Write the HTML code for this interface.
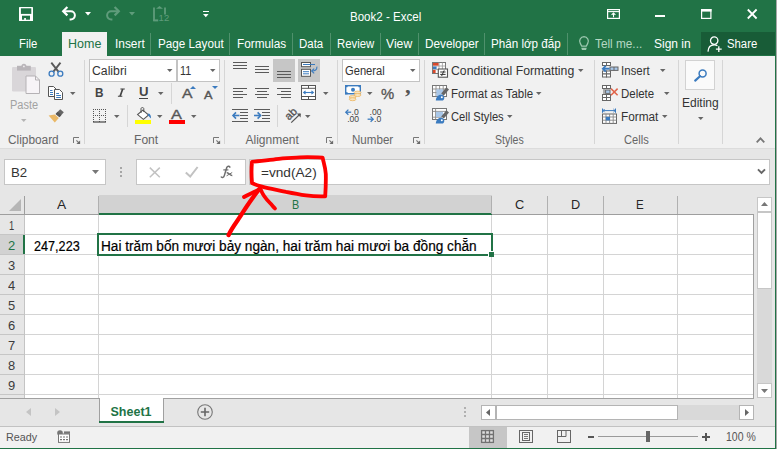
<!DOCTYPE html>
<html>
<head>
<meta charset="utf-8">
<title>Book2 - Excel</title>
<style>
html,body{margin:0;padding:0;}
body{width:777px;height:449px;overflow:hidden;position:relative;background:#f1f1f1;font-family:"Liberation Sans",sans-serif;font-size:12px;color:#444;}
.a{position:absolute;}
.t{position:absolute;white-space:nowrap;transform-origin:0 50%;}
.box{position:absolute;background:#fff;border:1px solid #c6c6c6;box-sizing:border-box;}
svg{position:absolute;overflow:visible;}
</style>
</head>
<body>
<div class="a" style="left:0px;top:0px;width:775px;height:56px;background:#217346;"></div>
<svg style="left:19px;top:7px" width="14" height="14" viewBox="0 0 14 14"><rect x="0" y="0" width="14" height="14" rx="0.6" fill="#fff"/><rect x="1.9" y="1.3" width="10.4" height="5.6" fill="#217346"/><rect x="3" y="8.7" width="8" height="4" fill="#217346"/><rect x="5.2" y="11" width="1.7" height="2" fill="#fff"/></svg>
<svg style="left:61px;top:6px" width="16" height="15" viewBox="0 0 16 15"><path d="M2.4 5.2H9.8A4.1 4.1 0 0 1 9.8 13.4H8.6" fill="none" stroke="#fff" stroke-width="2"/><path d="M6.4 1L2.2 5.2L6.4 9.4" fill="none" stroke="#fff" stroke-width="2.2"/></svg>
<svg style="left:85px;top:12px" width="6" height="3.5" viewBox="0 0 6 3.5"><path d="M0 0H6L3.0 3.5Z" fill="#fff"/></svg>
<svg style="left:105px;top:6px" width="16" height="15" viewBox="0 0 16 15"><path d="M13.6 5.2H6.2A4.1 4.1 0 0 0 6.2 13.4H7.4" fill="none" stroke="#5f9c7b" stroke-width="2"/><path d="M9.6 1L13.8 5.2L9.6 9.4" fill="none" stroke="#5f9c7b" stroke-width="2.2"/></svg>
<svg style="left:128.5px;top:12px" width="6" height="3.5" viewBox="0 0 6 3.5"><path d="M0 0H6L3.0 3.5Z" fill="#5f9c7b"/></svg>
<svg style="left:153px;top:6px" width="16" height="16" viewBox="0 0 16 16"><path d="M1 1.6V15" fill="none" stroke="#5f9c7b" stroke-width="1.8"/><path d="M0.2 14.4H5.2" stroke="#5f9c7b" stroke-width="2"/><path d="M12 1.6V8.6" fill="none" stroke="#5f9c7b" stroke-width="1.8"/><path d="M3 2.8L6.5 0L10 2.8Z" fill="#5f9c7b"/><text x="5.6" y="15.4" font-family="Liberation Sans" font-size="9.5" fill="#5f9c7b">12</text></svg>
<div class="a" style="left:203px;top:11px;width:5.6px;height:1.1px;background:#fff;"></div>
<svg style="left:203px;top:13.7px" width="5.6" height="3.2" viewBox="0 0 5.6 3.2"><path d="M0 0H5.6L2.8 3.2Z" fill="#fff"/></svg>
<span class="t" style='left:349.5px;top:8.5px;font-size:12.5px;color:#fff;line-height:16px;transform:scaleX(0.9232);'>Book2 - Excel</span>
<svg style="left:607px;top:9px" width="13" height="10" viewBox="0 0 13 10"><rect x="0.6" y="0.6" width="11.8" height="8.8" fill="none" stroke="#fff" stroke-width="1.2"/><path d="M0.6 2.6H12.4" stroke="#fff" stroke-width="1.1"/><path d="M6.5 8.2V4.2M4.6 5.9L6.5 4L8.4 5.9" fill="none" stroke="#fff" stroke-width="1.1"/></svg>
<div class="a" style="left:655px;top:15px;width:10px;height:1.6px;background:#fff;"></div>
<svg style="left:701px;top:9px" width="11" height="10" viewBox="0 0 11 10"><rect x="0.6" y="0.6" width="9.3" height="8.8" fill="none" stroke="#fff" stroke-width="1.2"/><rect x="0" y="0" width="10.5" height="2.6" fill="#fff"/></svg>
<svg style="left:747px;top:9px" width="11" height="10" viewBox="0 0 11 10"><path d="M0.8 0.5L9.6 9.5M9.6 0.5L0.8 9.5" stroke="#fff" stroke-width="1.8"/></svg>
<div class="a" style="left:62px;top:32px;width:45px;height:24px;background:#f1f1f1;"></div>
<div class="a" style="left:701px;top:32px;width:74px;height:23px;background:#185c37;"></div>
<span class="t" style='left:19.0px;top:36.0px;font-size:12.5px;color:#fff;line-height:16px;transform:scaleX(0.9029);'>File</span>
<span class="t" style='left:68.0px;top:36.0px;font-size:12.5px;color:#217346;line-height:16px;'>Home</span>
<span class="t" style='left:114.5px;top:36.0px;font-size:12.5px;color:#fff;line-height:16px;transform:scaleX(0.9499);'>Insert</span>
<span class="t" style='left:157.5px;top:36.0px;font-size:12.5px;color:#fff;line-height:16px;transform:scaleX(0.9359);'>Page Layout</span>
<span class="t" style='left:237.0px;top:36.0px;font-size:12.5px;color:#fff;line-height:16px;transform:scaleX(0.9445);'>Formulas</span>
<span class="t" style='left:299.0px;top:36.0px;font-size:12.5px;color:#fff;line-height:16px;transform:scaleX(0.9164);'>Data</span>
<span class="t" style='left:336.5px;top:36.0px;font-size:12.5px;color:#fff;line-height:16px;transform:scaleX(0.9073);'>Review</span>
<span class="t" style='left:385.5px;top:36.0px;font-size:12.5px;color:#fff;line-height:16px;transform:scaleX(0.9749);'>View</span>
<span class="t" style='left:424.5px;top:36.0px;font-size:12.5px;color:#fff;line-height:16px;transform:scaleX(0.9424);'>Developer</span>
<span class="t" style='left:490.5px;top:36.0px;font-size:12.5px;color:#fff;line-height:16px;transform:scaleX(0.9303);'>Phân lớp đắp</span>
<span class="t" style='left:595.0px;top:36.0px;font-size:12.5px;color:#b5d7c3;line-height:16px;transform:scaleX(0.9437);'>Tell me...</span>
<span class="t" style='left:654.0px;top:36.0px;font-size:12.5px;color:#fff;line-height:16px;transform:scaleX(0.9599);'>Sign in</span>
<span class="t" style='left:726.5px;top:36.0px;font-size:12.5px;color:#fff;line-height:16px;transform:scaleX(0.9053);'>Share</span>
<div class="a" style="left:150px;top:33px;width:1px;height:22px;background:#4f916c;"></div>
<div class="a" style="left:229px;top:33px;width:1px;height:22px;background:#4f916c;"></div>
<div class="a" style="left:292px;top:33px;width:1px;height:22px;background:#4f916c;"></div>
<div class="a" style="left:330px;top:33px;width:1px;height:22px;background:#4f916c;"></div>
<div class="a" style="left:380px;top:33px;width:1px;height:22px;background:#4f916c;"></div>
<div class="a" style="left:418px;top:33px;width:1px;height:22px;background:#4f916c;"></div>
<div class="a" style="left:484px;top:33px;width:1px;height:22px;background:#4f916c;"></div>
<div class="a" style="left:567px;top:33px;width:1px;height:22px;background:#4f916c;"></div>
<svg style="left:578px;top:36px" width="12" height="14" viewBox="0 0 12 14"><path d="M6 0.7A4.4 4.4 0 0 1 9.7 7.4L8.3 10.2H3.7L2.3 7.4A4.4 4.4 0 0 1 6 0.7Z" fill="none" stroke="#9cc8af" stroke-width="1.3"/><path d="M3.2 11.8H8.8L8 13.9H4Z" fill="#9cc8af"/></svg>
<svg style="left:707px;top:36px" width="17" height="17" viewBox="0 0 17 17"><circle cx="7.2" cy="4.6" r="3.7" fill="none" stroke="#fff" stroke-width="1.3"/><path d="M1 15.6C1.2 11 4 8.8 7.2 8.8C8.6 8.8 9.6 9.1 10.4 9.7" fill="none" stroke="#fff" stroke-width="1.3"/><path d="M11.8 10.2V16M8.9 13.1H14.7" stroke="#fff" stroke-width="1.3"/></svg>
<div class="a" style="left:0px;top:56px;width:775px;height:92px;background:#f1f1f1;"></div>
<div class="a" style="left:0px;top:148px;width:775px;height:1px;background:#dcdcdc;"></div>
<div class="a" style="left:84px;top:60px;width:1px;height:84px;background:#d6d6d6;"></div>
<div class="a" style="left:224px;top:60px;width:1px;height:84px;background:#d6d6d6;"></div>
<div class="a" style="left:337px;top:60px;width:1px;height:84px;background:#d6d6d6;"></div>
<div class="a" style="left:424px;top:60px;width:1px;height:84px;background:#d6d6d6;"></div>
<div class="a" style="left:594px;top:60px;width:1px;height:84px;background:#d6d6d6;"></div>
<div class="a" style="left:678px;top:60px;width:1px;height:84px;background:#d6d6d6;"></div>
<div class="a" style="left:722px;top:60px;width:1px;height:84px;background:#d6d6d6;"></div>
<svg style="left:12px;top:64px" width="28" height="30" viewBox="0 0 28 30"><rect x="0" y="3" width="24" height="24.5" rx="1.2" fill="#d9d6d9"/><rect x="5" y="1.8" width="13.8" height="4.8" fill="#b9b5b9"/><circle cx="11.9" cy="2.3" r="2.5" fill="#b9b5b9"/><circle cx="11.9" cy="2.4" r="0.9" fill="#efecef"/><path d="M14 12H23.5L27.5 16V29.5H14Z" fill="#f7f4f7" stroke="#b5b2b5" stroke-width="1"/><path d="M23.5 12V16H27.5" fill="none" stroke="#b5b2b5" stroke-width="1"/></svg>
<span class="t" style='left:10.0px;top:96.5px;font-size:12.5px;color:#a2a2a2;line-height:16px;transform:scaleX(0.8821);'>Paste</span>
<svg style="left:21px;top:119px" width="5.5" height="3" viewBox="0 0 5.5 3"><path d="M0 0H5.5L2.75 3Z" fill="#b5b5b5"/></svg>
<svg style="left:48px;top:62px" width="16" height="16" viewBox="0 0 16 16"><path d="M3.3 0.7L10.6 9.8M12.5 0.7L5.2 9.8" stroke="#5a5a5a" stroke-width="1.9" fill="none"/><circle cx="3.6" cy="11.7" r="2.5" fill="none" stroke="#3b7bbf" stroke-width="1.3"/><circle cx="12.3" cy="11.7" r="2.5" fill="none" stroke="#3b7bbf" stroke-width="1.3"/></svg>
<svg style="left:48px;top:86px" width="16" height="14" viewBox="0 0 16 14"><path d="M0.5 0.5H5.5L8 3V10.5H0.5Z" fill="#fff" stroke="#555" stroke-width="1"/><path d="M2 4.5H4.5M2 6.5H5M2 8.5H5" stroke="#3b7bbf" stroke-width="1"/><path d="M6.5 3.5H11.5L14.5 6.5V13.5H6.5Z" fill="#fff" stroke="#555" stroke-width="1"/><path d="M8.2 7.5H11M8.2 9.5H13M8.2 11.5H13" stroke="#3b7bbf" stroke-width="1"/></svg>
<svg style="left:70px;top:92px" width="5.5" height="3" viewBox="0 0 5.5 3"><path d="M0 0H5.5L2.75 3Z" fill="#666"/></svg>
<svg style="left:48px;top:108px" width="17" height="15" viewBox="0 0 17 15"><path d="M12.2 1.2L15.8 4.2L11.4 9.2L7.6 6Z" fill="#666"/><path d="M9.5 3.8L13.4 7L11.6 9L7.7 5.9Z" fill="#555"/><path d="M6.9 6.6L10.8 9.9L6.8 14.6L0.6 7.6Z" fill="#eab866"/></svg>
<span class="t" style='left:8.0px;top:131.5px;font-size:12px;color:#666;line-height:16px;transform:scaleX(0.9869);'>Clipboard</span>
<svg style="left:73px;top:137px" width="8" height="8" viewBox="0 0 8 8"><path d="M0.5 6V0.5H6" fill="none" stroke="#777" stroke-width="1"/><path d="M3.4 3.4L6 6" stroke="#777" stroke-width="1.1"/><path d="M7.1 3.4V7.1H3.4Z" fill="#6a6a6a"/></svg>
<div class="box" style="left:89px;top:59px;width:88px;height:23px;border-color:#c3c3c3"></div>
<div class="box" style="left:177px;top:59px;width:43px;height:23px;border-color:#c3c3c3"></div>
<span class="t" style='left:91.5px;top:62.5px;font-size:12.5px;color:#333;line-height:16px;transform:scaleX(0.9792);'>Calibri</span>
<svg style="left:167px;top:69px" width="5.5" height="3" viewBox="0 0 5.5 3"><path d="M0 0H5.5L2.75 3Z" fill="#666"/></svg>
<span class="t" style='left:180.0px;top:62.5px;font-size:12.5px;color:#333;line-height:16px;transform:scaleX(0.8626);'>11</span>
<svg style="left:209.5px;top:69px" width="5.5" height="3" viewBox="0 0 5.5 3"><path d="M0 0H5.5L2.75 3Z" fill="#666"/></svg>
<span class="t" style='left:95.0px;top:84.5px;font-size:12.5px;color:#444;line-height:16px;font-weight:bold;transform:scaleX(0.9412);'>B</span>
<svg style="left:0;top:0" width="777" height="449" viewBox="0 0 777 449"><path d="M120.4 89H124.8M117.9 96.2H122.3" stroke="#444" stroke-width="1.1"/><path d="M122.7 89L120.1 96.2" stroke="#444" stroke-width="1.7"/></svg>
<span class="t" style='left:138.5px;top:84.0px;font-size:12.5px;color:#444;line-height:16px;font-weight:bold;transform:scaleX(1.0519);'>U</span>
<div class="a" style="left:139px;top:98px;width:9px;height:1px;background:#444;"></div>
<svg style="left:158px;top:92px" width="5.5" height="3" viewBox="0 0 5.5 3"><path d="M0 0H5.5L2.75 3Z" fill="#666"/></svg>
<div class="a" style="left:171px;top:83px;width:1px;height:21px;background:#d6d6d6;"></div>
<span class="t" style='left:181.5px;top:85.5px;font-size:13.5px;color:#555;line-height:16px;transform:scaleX(1.1646);-webkit-text-stroke:0.35px #555;'>A</span>
<svg style="left:190px;top:86px" width="6" height="3" viewBox="0 0 6 3"><path d="M0 3H6L3 0Z" fill="#3b7bbf"/></svg>
<span class="t" style='left:204.3px;top:87.0px;font-size:10.5px;color:#555;line-height:16px;transform:scaleX(1.2116);-webkit-text-stroke:0.35px #555;'>A</span>
<svg style="left:212px;top:86px" width="6" height="3" viewBox="0 0 6 3"><path d="M0 0H6L3 3Z" fill="#3b7bbf"/></svg>
<svg style="left:93px;top:109px" width="13" height="14" viewBox="0 0 13 14"><rect x="0" y="0" width="1" height="1" fill="#555"/><rect x="0" y="6" width="1" height="1" fill="#555"/><rect x="0" y="0" width="1" height="1" fill="#555"/><rect x="6" y="0" width="1" height="1" fill="#555"/><rect x="12" y="0" width="1" height="1" fill="#555"/><rect x="2" y="0" width="1" height="1" fill="#555"/><rect x="2" y="6" width="1" height="1" fill="#555"/><rect x="0" y="2" width="1" height="1" fill="#555"/><rect x="6" y="2" width="1" height="1" fill="#555"/><rect x="12" y="2" width="1" height="1" fill="#555"/><rect x="4" y="0" width="1" height="1" fill="#555"/><rect x="4" y="6" width="1" height="1" fill="#555"/><rect x="0" y="4" width="1" height="1" fill="#555"/><rect x="6" y="4" width="1" height="1" fill="#555"/><rect x="12" y="4" width="1" height="1" fill="#555"/><rect x="6" y="0" width="1" height="1" fill="#555"/><rect x="6" y="6" width="1" height="1" fill="#555"/><rect x="0" y="6" width="1" height="1" fill="#555"/><rect x="6" y="6" width="1" height="1" fill="#555"/><rect x="12" y="6" width="1" height="1" fill="#555"/><rect x="8" y="0" width="1" height="1" fill="#555"/><rect x="8" y="6" width="1" height="1" fill="#555"/><rect x="0" y="8" width="1" height="1" fill="#555"/><rect x="6" y="8" width="1" height="1" fill="#555"/><rect x="12" y="8" width="1" height="1" fill="#555"/><rect x="10" y="0" width="1" height="1" fill="#555"/><rect x="10" y="6" width="1" height="1" fill="#555"/><rect x="0" y="10" width="1" height="1" fill="#555"/><rect x="6" y="10" width="1" height="1" fill="#555"/><rect x="12" y="10" width="1" height="1" fill="#555"/><rect x="12" y="0" width="1" height="1" fill="#555"/><rect x="12" y="6" width="1" height="1" fill="#555"/><rect x="0" y="12" width="1" height="1" fill="#555"/><rect x="6" y="12" width="1" height="1" fill="#555"/><rect x="12" y="12" width="1" height="1" fill="#555"/><rect x="0" y="12.4" width="13" height="1.2" fill="#444"/></svg>
<svg style="left:114px;top:115px" width="5.5" height="3" viewBox="0 0 5.5 3"><path d="M0 0H5.5L2.75 3Z" fill="#666"/></svg>
<div class="a" style="left:127px;top:105px;width:1px;height:22px;background:#d6d6d6;"></div>
<svg style="left:136px;top:107px" width="16" height="13" viewBox="0 0 16 13"><path d="M6.8 3.2L12.6 8L7.4 12.4L1.6 7.6Z" fill="#fff" stroke="#555" stroke-width="1.1"/><path d="M5 6V1.6C5 0.2 7.8 0.2 7.8 1.6V5" fill="none" stroke="#555" stroke-width="1"/><path d="M12.6 6.2C14.6 7.4 15.6 9.6 14.6 11.6C13.8 10 13 9 11.8 8.4Z" fill="#3b7bbf"/></svg>
<div class="a" style="left:135px;top:120px;width:16px;height:4px;background:#ffff00;"></div>
<svg style="left:157px;top:115px" width="5.5" height="3" viewBox="0 0 5.5 3"><path d="M0 0H5.5L2.75 3Z" fill="#666"/></svg>
<span class="t" style='left:171.3px;top:107.0px;font-size:13.5px;color:#555;line-height:16px;transform:scaleX(1.2090);-webkit-text-stroke:0.35px #555;'>A</span>
<div class="a" style="left:169px;top:120px;width:16px;height:4px;background:#ff0000;"></div>
<svg style="left:191px;top:115px" width="5.5" height="3" viewBox="0 0 5.5 3"><path d="M0 0H5.5L2.75 3Z" fill="#666"/></svg>
<span class="t" style='left:134.0px;top:131.5px;font-size:12px;color:#666;line-height:16px;transform:scaleX(1.0077);'>Font</span>
<svg style="left:213px;top:137px" width="8" height="8" viewBox="0 0 8 8"><path d="M0.5 6V0.5H6" fill="none" stroke="#777" stroke-width="1"/><path d="M3.4 3.4L6 6" stroke="#777" stroke-width="1.1"/><path d="M7.1 3.4V7.1H3.4Z" fill="#6a6a6a"/></svg>
<div class="a" style="left:233px;top:62px;width:14px;height:1px;background:#5a5a5a;"></div>
<div class="a" style="left:233px;top:65px;width:14px;height:1px;background:#5a5a5a;"></div>
<div class="a" style="left:233px;top:68px;width:14px;height:1px;background:#5a5a5a;"></div>
<div class="a" style="left:255px;top:66px;width:14px;height:1px;background:#5a5a5a;"></div>
<div class="a" style="left:255px;top:69px;width:14px;height:1px;background:#5a5a5a;"></div>
<div class="a" style="left:255px;top:72px;width:14px;height:1px;background:#5a5a5a;"></div>
<div class="a" style="left:273px;top:59px;width:22px;height:23px;background:#c6c6c6;"></div>
<div class="a" style="left:277px;top:71px;width:14px;height:1px;background:#5a5a5a;"></div>
<div class="a" style="left:277px;top:74px;width:14px;height:1px;background:#5a5a5a;"></div>
<div class="a" style="left:277px;top:77px;width:14px;height:1px;background:#5a5a5a;"></div>
<div class="a" style="left:298px;top:59px;width:22px;height:23px;background:#c6c6c6;"></div>
<svg style="left:301px;top:62px" width="17" height="15" viewBox="0 0 17 15"><rect x="0.5" y="0.5" width="9" height="4.2" fill="#fff" stroke="#555"/><path d="M2 2.5H14" stroke="#3b7bbf" stroke-width="1"/><rect x="0.5" y="7.3" width="9" height="7" fill="#fff" stroke="#555"/><path d="M2 9.7H8M2 11.8H8" stroke="#3b7bbf" stroke-width="1"/><path d="M15.9 4.6C16.2 7.8 14 9 11 9" fill="none" stroke="#3b7bbf" stroke-width="1.1"/><path d="M13.2 6.6L10.6 9L13.2 11.4" fill="none" stroke="#3b7bbf" stroke-width="1.1"/></svg>
<div class="a" style="left:233px;top:88px;width:14px;height:1px;background:#5a5a5a;"></div>
<div class="a" style="left:233px;top:91px;width:10px;height:1px;background:#5a5a5a;"></div>
<div class="a" style="left:233px;top:94px;width:14px;height:1px;background:#5a5a5a;"></div>
<div class="a" style="left:233px;top:97px;width:10px;height:1px;background:#5a5a5a;"></div>
<div class="a" style="left:255.0px;top:88px;width:14px;height:1px;background:#5a5a5a;"></div>
<div class="a" style="left:257.0px;top:91px;width:10px;height:1px;background:#5a5a5a;"></div>
<div class="a" style="left:255.0px;top:94px;width:14px;height:1px;background:#5a5a5a;"></div>
<div class="a" style="left:257.0px;top:97px;width:10px;height:1px;background:#5a5a5a;"></div>
<div class="a" style="left:277px;top:88px;width:14px;height:1px;background:#5a5a5a;"></div>
<div class="a" style="left:281px;top:91px;width:10px;height:1px;background:#5a5a5a;"></div>
<div class="a" style="left:277px;top:94px;width:14px;height:1px;background:#5a5a5a;"></div>
<div class="a" style="left:281px;top:97px;width:10px;height:1px;background:#5a5a5a;"></div>
<svg style="left:301px;top:85px" width="15" height="15" viewBox="0 0 15 15"><rect x="0.5" y="0.5" width="14" height="14" fill="#fff" stroke="#555"/><path d="M0.5 3.3H14.5M0.5 11.5H14.5M7.5 0.5V3.3M7.5 11.5V14.5" stroke="#555" stroke-width="1"/><path d="M3 7.5H12" stroke="#3b7bbf" stroke-width="1.1"/><path d="M4.6 5.8L2.6 7.5L4.6 9.2M10.4 5.8L12.4 7.5L10.4 9.2" fill="none" stroke="#3b7bbf" stroke-width="1.1"/></svg>
<svg style="left:323px;top:92px" width="5.5" height="3" viewBox="0 0 5.5 3"><path d="M0 0H5.5L2.75 3Z" fill="#666"/></svg>
<div class="a" style="left:232px;top:109px;width:16px;height:1px;background:#5a5a5a;"></div>
<div class="a" style="left:232px;top:121px;width:16px;height:1px;background:#5a5a5a;"></div>
<div class="a" style="left:240px;top:112px;width:8px;height:1px;background:#5a5a5a;"></div>
<div class="a" style="left:240px;top:115px;width:8px;height:1px;background:#5a5a5a;"></div>
<div class="a" style="left:240px;top:118px;width:8px;height:1px;background:#5a5a5a;"></div>
<svg style="left:232px;top:112px" width="8" height="7" viewBox="0 0 8 7"><path d="M1 3.5H7.5" stroke="#3b7bbf" stroke-width="1.6"/><path d="M4 0.4L1 3.5L4 6.6" fill="none" stroke="#3b7bbf" stroke-width="1.6"/></svg>
<div class="a" style="left:254px;top:109px;width:16px;height:1px;background:#5a5a5a;"></div>
<div class="a" style="left:254px;top:121px;width:16px;height:1px;background:#5a5a5a;"></div>
<div class="a" style="left:262px;top:112px;width:8px;height:1px;background:#5a5a5a;"></div>
<div class="a" style="left:262px;top:115px;width:8px;height:1px;background:#5a5a5a;"></div>
<div class="a" style="left:262px;top:118px;width:8px;height:1px;background:#5a5a5a;"></div>
<svg style="left:254px;top:112px" width="8" height="7" viewBox="0 0 8 7"><path d="M0 3.5H6.5" stroke="#3b7bbf" stroke-width="1.6"/><path d="M3.6 0.4L6.6 3.5L3.6 6.6" fill="none" stroke="#3b7bbf" stroke-width="1.6"/></svg>
<div class="a" style="left:277px;top:105px;width:1px;height:22px;background:#d6d6d6;"></div>
<svg style="left:285px;top:108px" width="17" height="15" viewBox="0 0 17 15"><g transform="translate(1.7,-1.9) rotate(-45 4 10)"><text x="-0.5" y="12.2" font-family="Liberation Sans" font-size="11" fill="#555" stroke="#555" stroke-width="0.35">ab</text></g><path d="M6.2 14.6L15.2 6" stroke="#555" stroke-width="1.2"/><path d="M11.8 5.6L15.8 5.4L15.6 9.4Z" fill="#555"/></svg>
<svg style="left:305px;top:115px" width="5.5" height="3" viewBox="0 0 5.5 3"><path d="M0 0H5.5L2.75 3Z" fill="#666"/></svg>
<span class="t" style='left:245.5px;top:131.5px;font-size:12px;color:#666;line-height:16px;'>Alignment</span>
<svg style="left:326px;top:137px" width="8" height="8" viewBox="0 0 8 8"><path d="M0.5 6V0.5H6" fill="none" stroke="#777" stroke-width="1"/><path d="M3.4 3.4L6 6" stroke="#777" stroke-width="1.1"/><path d="M7.1 3.4V7.1H3.4Z" fill="#6a6a6a"/></svg>
<div class="box" style="left:342px;top:59px;width:78px;height:23px;border-color:#c3c3c3"></div>
<span class="t" style='left:345.0px;top:62.5px;font-size:12.5px;color:#333;line-height:16px;transform:scaleX(0.8924);'>General</span>
<svg style="left:410px;top:69px" width="5.5" height="3" viewBox="0 0 5.5 3"><path d="M0 0H5.5L2.75 3Z" fill="#666"/></svg>
<svg style="left:345px;top:85px" width="17" height="16" viewBox="0 0 17 16"><rect x="0.7" y="0.7" width="14.6" height="8" fill="#fff" stroke="#3b7bbf" stroke-width="1.4"/><circle cx="8" cy="4.7" r="2" fill="#3b7bbf"/><rect x="0" y="0" width="2.6" height="2.2" fill="#3b7bbf"/><rect x="13.4" y="0" width="2.6" height="2.2" fill="#3b7bbf"/><rect x="0" y="7.2" width="2.6" height="2.2" fill="#3b7bbf"/><ellipse cx="12.6" cy="7.6" rx="3.4" ry="1.5" fill="#f8e3bd" stroke="#ecb664" stroke-width=".8"/><ellipse cx="12.6" cy="10" rx="3.4" ry="1.5" fill="#f8e3bd" stroke="#ecb664" stroke-width=".8"/><ellipse cx="7.6" cy="12" rx="3.4" ry="1.5" fill="#f8e3bd" stroke="#ecb664" stroke-width=".8"/><ellipse cx="7.6" cy="14.2" rx="3.4" ry="1.5" fill="#f8e3bd" stroke="#ecb664" stroke-width=".8"/></svg>
<svg style="left:367px;top:92px" width="5.5" height="3" viewBox="0 0 5.5 3"><path d="M0 0H5.5L2.75 3Z" fill="#666"/></svg>
<span class="t" style='left:380.5px;top:85.5px;font-size:14px;color:#555;line-height:16px;transform:scaleX(1.0600);-webkit-text-stroke:0.3px #555;'>%</span>
<span class="t" style='left:405.0px;top:77.5px;font-size:20px;color:#555;line-height:16px;font-weight:bold;font-family:"Liberation Serif",serif;transform:scaleX(1.1400);'>,</span>
<svg style="left:345px;top:108px" width="15" height="15" viewBox="0 0 15 15"><path d="M1 4.2H6.2" stroke="#3b7bbf" stroke-width="1.3"/><path d="M3.4 1.6L0.8 4.2L3.4 6.8" fill="none" stroke="#3b7bbf" stroke-width="1.3"/><text x="6.6" y="7" font-family="Liberation Sans" font-size="8.6" fill="#444">.0</text><text x="2.2" y="14" font-family="Liberation Sans" font-size="8.6" fill="#444">.00</text></svg>
<svg style="left:367px;top:108px" width="15" height="15" viewBox="0 0 15 15"><text x="2.6" y="7" font-family="Liberation Sans" font-size="8.6" fill="#444">.00</text><path d="M0.6 11.2H5.8" stroke="#3b7bbf" stroke-width="1.3"/><path d="M3.6 8.6L6.2 11.2L3.6 13.8" fill="none" stroke="#3b7bbf" stroke-width="1.3"/><text x="7" y="14" font-family="Liberation Sans" font-size="8.6" fill="#444">.0</text></svg>
<span class="t" style='left:352.0px;top:131.5px;font-size:12px;color:#666;line-height:16px;transform:scaleX(0.9652);'>Number</span>
<svg style="left:413px;top:137px" width="8" height="8" viewBox="0 0 8 8"><path d="M0.5 6V0.5H6" fill="none" stroke="#777" stroke-width="1"/><path d="M3.4 3.4L6 6" stroke="#777" stroke-width="1.1"/><path d="M7.1 3.4V7.1H3.4Z" fill="#6a6a6a"/></svg>
<svg style="left:432px;top:62px" width="17" height="16" viewBox="0 0 17 16"><rect x="0.5" y="0.5" width="13" height="11" fill="#fff" stroke="#777"/><path d="M0.5 4H13.5M0.5 7.6H13.5M7 0.5V11.5M10.4 0.5V11.5" stroke="#999" stroke-width=".8"/><rect x="1" y="1" width="5.6" height="2.6" fill="#d9482b"/><rect x="1" y="4.5" width="3.6" height="2.6" fill="#3b7bbf"/><rect x="1" y="8" width="2.6" height="3" fill="#d9482b"/><rect x="6.3" y="7" width="9.2" height="8.2" fill="#fff" stroke="#555" stroke-width="1.1"/><path d="M8.2 10H13.6M8.2 12.4H13.6M12.2 8.4L9.6 14" stroke="#333" stroke-width="1"/></svg>
<svg style="left:432px;top:85px" width="17" height="16" viewBox="0 0 17 16"><rect x="0.5" y="0.5" width="14" height="11" fill="#fff" stroke="#777"/><path d="M0.5 4H14.5M0.5 7.6H14.5M4 0.5V11.5M7.6 0.5V11.5M11.2 0.5V11.5" stroke="#888" stroke-width=".9"/><rect x="4.4" y="4.4" width="6.6" height="6.8" fill="#a9c7e8"/><path d="M14.4 2.2L17 4.4L11.8 10.6L9.2 8.4Z" fill="#666"/><path d="M3.8 15.6C4 12 6.6 9.2 9.6 9.8C12.6 10.4 13.2 13.6 11 15.6Z" fill="#3b7bbf"/><circle cx="9.8" cy="12.3" r="1" fill="#fff"/></svg>
<svg style="left:432px;top:108px" width="17" height="16" viewBox="0 0 17 16"><rect x="0.5" y="0.5" width="14" height="11" fill="#fff" stroke="#777"/><path d="M0.5 3.4H14.5M0.5 9.2H10M3.6 0.5V11.5" stroke="#888" stroke-width=".9"/><rect x="4" y="3.8" width="7" height="5.2" fill="#a9c7e8"/><path d="M14.4 2.2L17 4.4L11.8 10.6L9.2 8.4Z" fill="#666"/><path d="M3.8 15.6C4 12 6.6 9.2 9.6 9.8C12.6 10.4 13.2 13.6 11 15.6Z" fill="#3b7bbf"/><circle cx="9.8" cy="12.3" r="1" fill="#fff"/></svg>
<span class="t" style='left:451.0px;top:62.5px;font-size:12.5px;color:#333;line-height:16px;transform:scaleX(0.9796);'>Conditional Formatting</span>
<svg style="left:578px;top:69px" width="5.5" height="3" viewBox="0 0 5.5 3"><path d="M0 0H5.5L2.75 3Z" fill="#666"/></svg>
<span class="t" style='left:451.0px;top:85.5px;font-size:12.5px;color:#333;line-height:16px;transform:scaleX(0.9194);'>Format as Table</span>
<svg style="left:536px;top:92px" width="5.5" height="3" viewBox="0 0 5.5 3"><path d="M0 0H5.5L2.75 3Z" fill="#666"/></svg>
<span class="t" style='left:451.0px;top:108.5px;font-size:12.5px;color:#333;line-height:16px;transform:scaleX(0.8925);'>Cell Styles</span>
<svg style="left:507px;top:115px" width="5.5" height="3" viewBox="0 0 5.5 3"><path d="M0 0H5.5L2.75 3Z" fill="#666"/></svg>
<span class="t" style='left:494.5px;top:131.5px;font-size:12px;color:#666;line-height:16px;transform:scaleX(0.8780);'>Styles</span>
<svg style="left:602px;top:62px" width="17" height="16" viewBox="0 0 17 16"><rect x="0.5" y="0.5" width="4" height="3" fill="#fff" stroke="#666" stroke-width="1"/><rect x="4.5" y="0.5" width="4" height="3" fill="#fff" stroke="#666" stroke-width="1"/><rect x="0.5" y="9" width="4" height="3" fill="#fff" stroke="#666" stroke-width="1"/><rect x="4.5" y="9" width="4" height="3" fill="#fff" stroke="#666" stroke-width="1"/><rect x="0.5" y="12" width="4" height="3" fill="#fff" stroke="#666" stroke-width="1"/><rect x="4.5" y="12" width="4" height="3" fill="#fff" stroke="#666" stroke-width="1"/><rect x="8" y="5" width="8" height="3.4" fill="#a9c7e8" stroke="#666"/><path d="M12 5V8.4" stroke="#666"/><path d="M1 6.7H7.6" stroke="#3b7bbf" stroke-width="1.9"/><path d="M3.8 3.8L0.9 6.7L3.8 9.6" fill="none" stroke="#3b7bbf" stroke-width="1.9"/></svg>
<svg style="left:602px;top:85px" width="17" height="16" viewBox="0 0 17 16"><rect x="0.5" y="0.5" width="4" height="3" fill="#fff" stroke="#666" stroke-width="1"/><rect x="4.5" y="0.5" width="4" height="3" fill="#fff" stroke="#666" stroke-width="1"/><rect x="0.5" y="9.5" width="4" height="3" fill="#fff" stroke="#666" stroke-width="1"/><rect x="4.5" y="9.5" width="4" height="3" fill="#fff" stroke="#666" stroke-width="1"/><rect x="0.5" y="12.5" width="4" height="3" fill="#fff" stroke="#666" stroke-width="1"/><rect x="4.5" y="12.5" width="4" height="3" fill="#fff" stroke="#666" stroke-width="1"/><rect x="3.6" y="5" width="4.4" height="3.4" fill="#a9c7e8" stroke="#666"/><path d="M2 3.5V9.5" stroke="#666"/><path d="M9 3.6L15.6 10.2M15.6 3.6L9 10.2" stroke="#e0644a" stroke-width="1.5"/></svg>
<svg style="left:602px;top:108px" width="17" height="16" viewBox="0 0 17 16"><path d="M0.5 2.6H13.5" stroke="#3b7bbf" stroke-width="1"/><path d="M0.5 0.5V4.8M13.5 0.5V4.8" stroke="#3b7bbf" stroke-width="1"/><path d="M2.6 1L1 2.6L2.6 4.2M11.4 1L13 2.6L11.4 4.2" fill="none" stroke="#3b7bbf" stroke-width="1"/><rect x="0.5" y="6" width="14" height="9.4" fill="#fff" stroke="#666"/><path d="M0.5 9H14.5M0.5 12.2H14.5M4 6V15.4M7.6 6V15.4M11.2 6V15.4" stroke="#888" stroke-width=".9"/><rect x="3.8" y="8.8" width="4.2" height="3.6" fill="#3b7bbf"/></svg>
<span class="t" style='left:621.0px;top:62.5px;font-size:12.5px;color:#333;line-height:16px;transform:scaleX(0.9179);'>Insert</span>
<svg style="left:660px;top:69px" width="5.5" height="3" viewBox="0 0 5.5 3"><path d="M0 0H5.5L2.75 3Z" fill="#666"/></svg>
<span class="t" style='left:621.0px;top:85.5px;font-size:12.5px;color:#333;line-height:16px;transform:scaleX(0.9186);'>Delete</span>
<svg style="left:664px;top:92px" width="5.5" height="3" viewBox="0 0 5.5 3"><path d="M0 0H5.5L2.75 3Z" fill="#666"/></svg>
<span class="t" style='left:621.0px;top:108.5px;font-size:12.5px;color:#333;line-height:16px;transform:scaleX(0.9446);'>Format</span>
<svg style="left:662px;top:115px" width="5.5" height="3" viewBox="0 0 5.5 3"><path d="M0 0H5.5L2.75 3Z" fill="#666"/></svg>
<span class="t" style='left:623.5px;top:131.5px;font-size:12px;color:#666;line-height:16px;transform:scaleX(0.9261);'>Cells</span>
<div class="box" style="left:685px;top:60px;width:30px;height:30px;border-color:#d2d2d2;background:#fafafa"></div>
<svg style="left:694px;top:69px" width="14" height="13" viewBox="0 0 14 13"><circle cx="8.6" cy="4.6" r="3.5" fill="none" stroke="#3b7bbf" stroke-width="1.5"/><path d="M6 7.2L1.2 11.6" stroke="#3b7bbf" stroke-width="2.2" stroke-linecap="round"/></svg>
<span class="t" style='left:682.0px;top:94.5px;font-size:12.5px;color:#333;line-height:16px;transform:scaleX(0.9599);'>Editing</span>
<svg style="left:698px;top:117px" width="5.5" height="3" viewBox="0 0 5.5 3"><path d="M0 0H5.5L2.75 3Z" fill="#666"/></svg>
<svg style="left:756px;top:137px" width="9" height="6" viewBox="0 0 9 6"><path d="M0.7 5.3L4.5 1.4L8.3 5.3" fill="none" stroke="#777" stroke-width="1.8"/></svg>
<div class="a" style="left:0px;top:149px;width:775px;height:46px;background:#e6e6e6;"></div>
<div class="box" style="left:4px;top:159px;width:102px;height:26px;border-color:#c6c6c6"></div>
<span class="t" style='left:10.5px;top:164.5px;font-size:12.5px;color:#333;line-height:16px;transform:scaleX(1.0590);'>B2</span>
<svg style="left:92px;top:170px" width="7" height="4" viewBox="0 0 7 4"><path d="M0 0H7L3.5 4Z" fill="#777"/></svg>
<div class="a" style="left:120px;top:167px;width:2px;height:2px;background:#a6a6a6;"></div>
<div class="a" style="left:120px;top:171px;width:2px;height:2px;background:#a6a6a6;"></div>
<div class="a" style="left:120px;top:175px;width:2px;height:2px;background:#a6a6a6;"></div>
<div class="box" style="left:136px;top:159px;width:110px;height:26px;border-color:#c6c6c6"></div>
<svg style="left:149px;top:167px" width="12" height="11" viewBox="0 0 12 11"><path d="M0.8 0.6L10.8 10.2M10.8 0.6L0.8 10.2" stroke="#c2c2c2" stroke-width="1.5"/></svg>
<svg style="left:185px;top:166px" width="14" height="12" viewBox="0 0 14 12"><path d="M0.8 6.6L5.2 10.6L12.6 1" fill="none" stroke="#c2c2c2" stroke-width="2"/></svg>
<svg style="left:0;top:0" width="777" height="449" viewBox="0 0 777 449"><path d="M229.9 167.1C229.2 165.7 227.1 165.8 226.7 167.8L224.3 175.6C223.8 177.5 222.3 177.9 221.3 177" fill="none" stroke="#6e6e6e" stroke-width="1.5" stroke-linecap="round"/><path d="M223.3 169.9H228.4" stroke="#6e6e6e" stroke-width="1.2"/><path d="M226.7 172.7C228.6 172.5 230 175.7 232.3 175.5" fill="none" stroke="#6e6e6e" stroke-width="1.5"/><path d="M232.2 172.5L226.6 175.8" stroke="#6e6e6e" stroke-width="1"/></svg>
<div class="box" style="left:249px;top:159px;width:521px;height:26px;border-color:#c6c6c6"></div>
<span class="t" style='left:260.5px;top:164.5px;font-size:13px;color:#333;line-height:16px;transform:scaleX(1.0485);'>=vnd(A2)</span>
<svg style="left:757px;top:168px" width="9" height="7" viewBox="0 0 9 7"><path d="M1 1.4L4.5 5L8 1.4" fill="none" stroke="#666" stroke-width="1.9"/></svg>
<div class="a" style="left:0px;top:195px;width:775px;height:20px;background:#e6e6e6;"></div>
<div class="a" style="left:0px;top:214px;width:754px;height:1px;background:#9e9e9e;"></div>
<svg style="left:9px;top:199px" width="12" height="12" viewBox="0 0 12 12"><path d="M12 0V12H0Z" fill="#b6b6b6"/></svg>
<div class="a" style="left:24px;top:196px;width:1px;height:19px;background:#9e9e9e;"></div>
<div class="a" style="left:99px;top:195px;width:393px;height:19px;background:#d2d2d2;"></div>
<div class="a" style="left:99px;top:213px;width:393px;height:2px;background:#217346;"></div>
<div class="a" style="left:98px;top:196px;width:1px;height:18px;background:#b0b0b0;"></div>
<div class="a" style="left:491px;top:196px;width:1px;height:18px;background:#b0b0b0;"></div>
<div class="a" style="left:547px;top:196px;width:1px;height:18px;background:#b0b0b0;"></div>
<div class="a" style="left:603px;top:196px;width:1px;height:18px;background:#b0b0b0;"></div>
<div class="a" style="left:677px;top:196px;width:1px;height:18px;background:#b0b0b0;"></div>
<span class="t" style='left:57.0px;top:196.5px;font-size:13.5px;color:#262626;line-height:16px;transform:scaleX(1.0205);'>A</span>
<span class="t" style='left:291.5px;top:196.5px;font-size:13.5px;color:#217346;line-height:16px;transform:scaleX(0.7986);'>B</span>
<span class="t" style='left:515.0px;top:196.5px;font-size:13.5px;color:#262626;line-height:16px;transform:scaleX(0.9436);'>C</span>
<span class="t" style='left:570.5px;top:196.5px;font-size:13.5px;color:#262626;line-height:16px;transform:scaleX(0.9436);'>D</span>
<span class="t" style='left:636.0px;top:196.5px;font-size:13.5px;color:#262626;line-height:16px;transform:scaleX(0.8541);'>E</span>
<div class="a" style="left:25px;top:215px;width:728px;height:183px;background:#fff;"></div>
<div class="a" style="left:753px;top:215px;width:1px;height:183px;background:#a0a0a0;"></div>
<div class="a" style="left:25px;top:234px;width:728px;height:1px;background:#d4d4d4;"></div>
<div class="a" style="left:25px;top:254px;width:728px;height:1px;background:#d4d4d4;"></div>
<div class="a" style="left:25px;top:274px;width:728px;height:1px;background:#d4d4d4;"></div>
<div class="a" style="left:25px;top:294px;width:728px;height:1px;background:#d4d4d4;"></div>
<div class="a" style="left:25px;top:314px;width:728px;height:1px;background:#d4d4d4;"></div>
<div class="a" style="left:25px;top:334px;width:728px;height:1px;background:#d4d4d4;"></div>
<div class="a" style="left:25px;top:354px;width:728px;height:1px;background:#d4d4d4;"></div>
<div class="a" style="left:25px;top:374px;width:728px;height:1px;background:#d4d4d4;"></div>
<div class="a" style="left:25px;top:394px;width:728px;height:1px;background:#d4d4d4;"></div>
<div class="a" style="left:98px;top:215px;width:1px;height:183px;background:#d4d4d4;"></div>
<div class="a" style="left:491px;top:215px;width:1px;height:183px;background:#d4d4d4;"></div>
<div class="a" style="left:547px;top:215px;width:1px;height:183px;background:#d4d4d4;"></div>
<div class="a" style="left:603px;top:215px;width:1px;height:183px;background:#d4d4d4;"></div>
<div class="a" style="left:677px;top:215px;width:1px;height:183px;background:#d4d4d4;"></div>
<div class="a" style="left:0px;top:215px;width:24px;height:183px;background:#e6e6e6;"></div>
<div class="a" style="left:24px;top:215px;width:1px;height:183px;background:#c4c4c4;"></div>
<div class="a" style="left:0px;top:235px;width:23px;height:19px;background:#d2d2d2;"></div>
<div class="a" style="left:23px;top:235px;width:2px;height:19px;background:#217346;"></div>
<div class="a" style="left:0px;top:234px;width:24px;height:1px;background:#c6c6c6;"></div>
<span class="t" style='left:8.5px;top:217.5px;font-size:13.5px;color:#3c3c3c;line-height:16px;transform:scaleX(0.6919);'>1</span>
<div class="a" style="left:0px;top:254px;width:24px;height:1px;background:#c6c6c6;"></div>
<span class="t" style='left:7.5px;top:237.5px;font-size:13.5px;color:#217346;line-height:16px;transform:scaleX(0.9580);'>2</span>
<div class="a" style="left:0px;top:274px;width:24px;height:1px;background:#c6c6c6;"></div>
<span class="t" style='left:7.5px;top:257.5px;font-size:13.5px;color:#3c3c3c;line-height:16px;transform:scaleX(0.9580);'>3</span>
<div class="a" style="left:0px;top:294px;width:24px;height:1px;background:#c6c6c6;"></div>
<span class="t" style='left:7.5px;top:277.5px;font-size:13.5px;color:#3c3c3c;line-height:16px;transform:scaleX(0.9580);'>4</span>
<div class="a" style="left:0px;top:314px;width:24px;height:1px;background:#c6c6c6;"></div>
<span class="t" style='left:7.5px;top:297.5px;font-size:13.5px;color:#3c3c3c;line-height:16px;transform:scaleX(0.9580);'>5</span>
<div class="a" style="left:0px;top:334px;width:24px;height:1px;background:#c6c6c6;"></div>
<span class="t" style='left:7.5px;top:317.5px;font-size:13.5px;color:#3c3c3c;line-height:16px;transform:scaleX(0.9580);'>6</span>
<div class="a" style="left:0px;top:354px;width:24px;height:1px;background:#c6c6c6;"></div>
<span class="t" style='left:7.5px;top:337.5px;font-size:13.5px;color:#3c3c3c;line-height:16px;transform:scaleX(0.9580);'>7</span>
<div class="a" style="left:0px;top:374px;width:24px;height:1px;background:#c6c6c6;"></div>
<span class="t" style='left:7.5px;top:357.5px;font-size:13.5px;color:#3c3c3c;line-height:16px;transform:scaleX(0.9580);'>8</span>
<div class="a" style="left:0px;top:394px;width:24px;height:1px;background:#c6c6c6;"></div>
<span class="t" style='left:7.5px;top:377.5px;font-size:13.5px;color:#3c3c3c;line-height:16px;transform:scaleX(0.9580);'>9</span>
<span class="t" style='left:34.0px;top:237.5px;font-size:14px;color:#000;line-height:16px;transform:scaleX(0.9030);-webkit-text-stroke:0.2px #000;'>247,223</span>
<span class="t" style='left:100.5px;top:237.5px;font-size:14px;color:#000;line-height:16px;transform:scaleX(0.9739);-webkit-text-stroke:0.2px #000;'>Hai trăm bốn mươi bảy ngàn, hai trăm hai mươi ba đồng chẵn</span>
<div class="a" style="left:97px;top:233px;width:392px;height:19px;border:2px solid #217346;"></div>
<div class="a" style="left:488px;top:251px;width:6px;height:6px;background:#fff;"></div>
<div class="a" style="left:489px;top:252px;width:5px;height:5px;background:#217346;"></div>
<div class="a" style="left:754px;top:195px;width:21px;height:203px;background:#e6e6e6;"></div>
<div class="a" style="left:757px;top:212px;width:15px;height:172px;background:#d9d9d9;"></div>
<div class="box" style="left:757px;top:197px;width:15px;height:15px;border-color:#c6c6c6"></div>
<svg style="left:761px;top:202px" width="7" height="4" viewBox="0 0 7 4"><path d="M0 4H7L3.5 0Z" fill="#777"/></svg>
<div class="box" style="left:757px;top:212px;width:15px;height:77px;border-color:#c6c6c6"></div>
<div class="box" style="left:757px;top:383px;width:15px;height:15px;border-color:#c6c6c6"></div>
<svg style="left:761px;top:389px" width="7" height="4" viewBox="0 0 7 4"><path d="M0 0H7L3.5 4Z" fill="#777"/></svg>
<div class="a" style="left:0px;top:398px;width:775px;height:28px;background:#e6e6e6;"></div>
<div class="a" style="left:0px;top:398px;width:99px;height:1px;background:#a0a0a0;"></div>
<div class="a" style="left:164px;top:398px;width:590px;height:1px;background:#a0a0a0;"></div>
<div class="a" style="left:99px;top:398px;width:65px;height:23px;background:#fff;"></div>
<div class="a" style="left:99px;top:398px;width:1px;height:24px;background:#a0a0a0;"></div>
<div class="a" style="left:163px;top:398px;width:1px;height:24px;background:#a0a0a0;"></div>
<div class="a" style="left:99px;top:421px;width:65px;height:2px;background:#217346;"></div>
<span class="t" style='left:110.5px;top:403.5px;font-size:12.5px;color:#217346;line-height:16px;font-weight:bold;'>Sheet1</span>
<svg style="left:26px;top:408px" width="5" height="8" viewBox="0 0 5 8"><path d="M5 0V8L0 4Z" fill="#c4c4c4"/></svg>
<svg style="left:55px;top:408px" width="5" height="8" viewBox="0 0 5 8"><path d="M0 0V8L5 4Z" fill="#c4c4c4"/></svg>
<svg style="left:197px;top:404px" width="16" height="16" viewBox="0 0 16 16"><circle cx="8" cy="8" r="7.3" fill="none" stroke="#777" stroke-width="1.1"/><path d="M8 3.8V12.2M3.8 8H12.2" stroke="#666" stroke-width="1.6"/></svg>
<div class="a" style="left:464px;top:407px;width:2px;height:2px;background:#b0b0b0;"></div>
<div class="a" style="left:464px;top:411px;width:2px;height:2px;background:#b0b0b0;"></div>
<div class="a" style="left:464px;top:415px;width:2px;height:2px;background:#b0b0b0;"></div>
<div class="a" style="left:481px;top:405px;width:273px;height:15px;background:#d9d9d9;"></div>
<div class="box" style="left:481px;top:405px;width:15px;height:15px;border-color:#b4b4b4"></div>
<svg style="left:486px;top:409px" width="4" height="7" viewBox="0 0 4 7"><path d="M4 0V7L0 3.5Z" fill="#666"/></svg>
<div class="box" style="left:496px;top:405px;width:182px;height:15px;border-color:#b4b4b4"></div>
<div class="box" style="left:739px;top:405px;width:15px;height:15px;border-color:#b4b4b4"></div>
<svg style="left:745px;top:409px" width="4" height="7" viewBox="0 0 4 7"><path d="M0 0V7L4 3.5Z" fill="#666"/></svg>
<div class="a" style="left:0px;top:426px;width:775px;height:1px;background:#c2c2c2;"></div>
<div class="a" style="left:0px;top:427px;width:775px;height:21px;background:#f1f1f1;"></div>
<span class="t" style='left:6.0px;top:429.0px;font-size:11.5px;color:#555;line-height:16px;transform:scaleX(0.9383);'>Ready</span>
<svg style="left:57px;top:430px" width="13" height="13" viewBox="0 0 13 13"><circle cx="3" cy="3" r="2.8" fill="#777"/><rect x="7" y="1.4" width="6" height="2.4" fill="#777"/><rect x="1.5" y="4" width="11" height="8.4" fill="#fff" stroke="#777" stroke-width="1"/><path d="M3 7H5M6 7H8M9 7H11M3 9.6H5M6 9.6H8M9 9.6H11" stroke="#777" stroke-width="1.2"/></svg>
<div class="a" style="left:469px;top:427px;width:38px;height:21px;background:#c6c6c6;"></div>
<svg style="left:481px;top:430px" width="13" height="13" viewBox="0 0 13 13"><rect x="0.6" y="0.6" width="11.8" height="11.8" fill="#dedede" stroke="#727272" stroke-width="1.3"/><path d="M4.5 0.5V12.5M8.5 0.5V12.5M0.5 4.5H12.5M0.5 8.5H12.5" stroke="#727272" stroke-width="1.3"/></svg>
<svg style="left:519px;top:430px" width="14" height="13" viewBox="0 0 14 13"><rect x="0.5" y="0.5" width="13" height="12" fill="none" stroke="#666"/><rect x="3.5" y="2.5" width="7" height="8" fill="none" stroke="#666"/><path d="M5 4.5H9M5 6.5H9M5 8.5H9" stroke="#666" stroke-width="0.9"/></svg>
<svg style="left:557px;top:430px" width="14" height="13" viewBox="0 0 14 13"><rect x="0.5" y="0.5" width="13" height="12" fill="none" stroke="#666"/><path d="M0.5 6.5H9M4.5 0.5V6.5M9 0.5V6.5" fill="none" stroke="#666"/></svg>
<div class="a" style="left:588px;top:436px;width:6px;height:1.6px;background:#555;"></div>
<div class="a" style="left:598px;top:436px;width:100px;height:1px;background:#9a9a9a;"></div>
<div class="a" style="left:646px;top:431px;width:4px;height:11px;background:#666;"></div>
<div class="a" style="left:702px;top:436px;width:8px;height:1.8px;background:#555;"></div>
<div class="a" style="left:705px;top:433px;width:1.8px;height:8px;background:#555;"></div>
<span class="t" style='left:725.5px;top:428.5px;font-size:12px;color:#555;line-height:16px;transform:scaleX(0.8727);'>100 %</span>
<svg style="left:0;top:0" width="777" height="449" viewBox="0 0 777 449"><path d="M252 161.8 C260 160.8 268 160.6 276 159.2 C284 158 292 158 300 157.4 C308 156.8 316 157.4 322.6 157.6 C323.4 162 325.4 167 325.8 174 C326 181 325.6 190 325.2 196.3 C318 196.6 312 196.2 306 195.4 C298 194.2 292 193 286 191.8 C278 190 270 188.6 262 186.6 C258 185.6 255 184.6 252 183 C251.4 176 251.4 168 252 161.8Z" fill="none" stroke="#ff0000" stroke-width="3.8" stroke-linejoin="round"/><path d="M228.6 235 C231 230 234 225.5 237.5 220.5 C241 215.5 244 210.5 247 206 C251 200 255 194.5 259.5 189" fill="none" stroke="#ff0000" stroke-width="4.3" stroke-linecap="round"/><path d="M244 197 C248 194.6 251 193.6 254 192 C256 191 258 190 260 189" fill="none" stroke="#ff0000" stroke-width="3.8" stroke-linecap="round"/><path d="M261 190 C263 196 267 200 270 203 C272 205 273.5 207 275 208.5" fill="none" stroke="#ff0000" stroke-width="3.8" stroke-linecap="round"/></svg>
<div class="a" style="left:775px;top:0px;width:1px;height:449px;background:#217346;"></div>
<div class="a" style="left:776px;top:0px;width:1px;height:449px;background:#a8a8a8;"></div>
<div class="a" style="left:0px;top:448px;width:776px;height:1px;background:#217346;"></div>
</body>
</html>
